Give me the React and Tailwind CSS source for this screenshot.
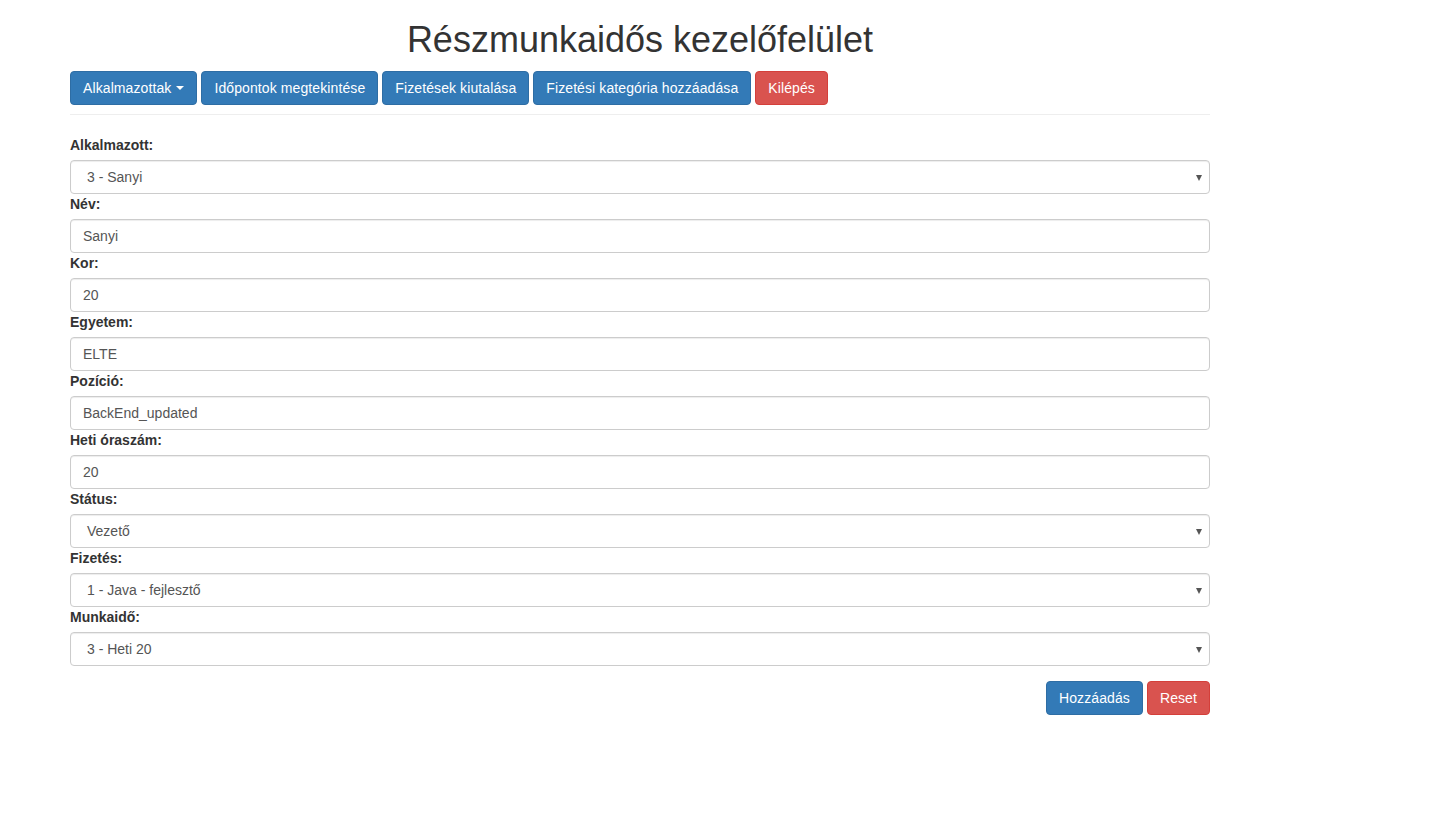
import { useState } from "react"

const navButtons = [
    { label: "Alkalmazottak", caret: true },
    { label: "Időpontok megtekintése" },
    { label: "Fizetések kiutalása" },
    { label: "Fizetési kategória hozzáadása" },
    { label: "Kilépés", danger: true },
]

const fields = [
    { label: "Alkalmazott:", value: "3 - Sanyi", select: true },
    { label: "Név:", value: "Sanyi" },
    { label: "Kor:", value: "20" },
    { label: "Egyetem:", value: "ELTE" },
    { label: "Pozíció:", value: "BackEnd_updated" },
    { label: "Heti óraszám:", value: "20" },
    { label: "Státus:", value: "Vezető", select: true },
    { label: "Fizetés:", value: "1 - Java - fejlesztő", select: true },
    { label: "Munkaidő:", value: "3 - Heti 20", select: true },
]

function Btn({ children, danger, className = "" }) {
    return (
        <button
            className={
                "h-[34px] px-3 rounded-[4px] border text-[14px] leading-5 text-white tracking-[0.1px] " +
                (danger ? "bg-[#d9534f] border-[#d43f3a] " : "bg-[#337ab7] border-[#2e6da4] ") +
                className
            }
        >
            {children}
        </button>
    )
}

function Field({ field }) {
    const [value, setValue] = useState(field.value)

    return (
        <div>
            <label className="block mb-[5px] text-[14px] leading-5 font-bold text-[#333]">
                {field.label}
            </label>

            {field.select ? (
                <div className="relative h-[34px] w-full rounded-[4px] border border-[#ccc] bg-white shadow-[inset_0_1px_1px_rgba(0,0,0,0.075)] flex items-center pl-4 text-[14px] text-[#555]">
                    {value}
                    <span className="absolute right-[7px] top-[14px] w-0 h-0 border-l-[3.5px] border-r-[3.5px] border-t-[6px] border-l-transparent border-r-transparent border-t-[#555]" />
                </div>
            ) : (
                <input
                    type="text"
                    value={value}
                    onChange={(e) => setValue(e.target.value)}
                    className="block h-[34px] w-full rounded-[4px] border border-[#ccc] bg-white px-3 text-[14px] text-[#555] shadow-[inset_0_1px_1px_rgba(0,0,0,0.075)] outline-none"
                />
            )}
        </div>
    )
}

export default function App() {
    return (
        <div className="min-h-screen bg-white font-['Liberation_Sans',Arial,sans-serif] text-[#333]">
            <div className="ml-[70px] w-[1140px]">

                {/* HEADER */}
                <h1 className="pt-5 mb-[11px] text-center text-[36px] leading-[40px] text-[#333]">
                    Részmunkaidős kezelőfelület
                </h1>

                {/* NAV */}
                <div className="flex gap-1">
                    {navButtons.map((b) => (
                        <Btn key={b.label} danger={b.danger}>
                            <span className="flex items-center gap-[5px]">
                                {b.label}
                                {b.caret && (
                                    <span className="w-0 h-0 border-l-4 border-r-4 border-t-4 border-l-transparent border-r-transparent border-t-white" />
                                )}
                            </span>
                        </Btn>
                    ))}
                </div>

                <hr className="mt-[9px] mb-5 border-t border-[#eee]" />

                {/* FORM */}
                <div>
                    {fields.map((f) => (
                        <Field key={f.label} field={f} />
                    ))}
                </div>

                <div className="flex justify-end gap-1 mt-[15px]">
                    <Btn>Hozzáadás</Btn>
                    <Btn danger>Reset</Btn>
                </div>
            </div>
        </div>
    )
}
